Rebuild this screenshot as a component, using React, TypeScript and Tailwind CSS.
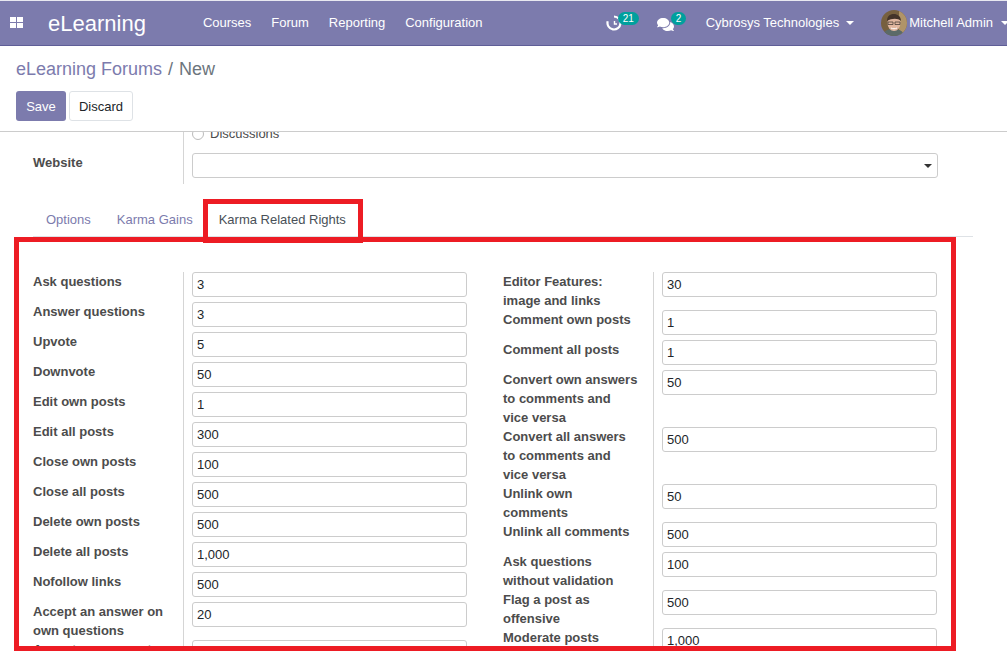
import React from 'react';
import { FaComments } from 'react-icons/fa';

const leftRows: [string, string][] = [
  ['Ask questions', '3'],
  ['Answer questions', '3'],
  ['Upvote', '5'],
  ['Downvote', '50'],
  ['Edit own posts', '1'],
  ['Edit all posts', '300'],
  ['Close own posts', '100'],
  ['Close all posts', '500'],
  ['Delete own posts', '500'],
  ['Delete all posts', '1,000'],
  ['Nofollow links', '500'],
  ['Accept an answer on own questions', '20'],
  ['Accept an answer to all questions', '50'],
];

const rightRows: [string, string][] = [
  ['Editor Features: image and links', '30'],
  ['Comment own posts', '1'],
  ['Comment all posts', '1'],
  ['Convert own answers to comments and vice versa', '50'],
  ['Convert all answers to comments and vice versa', '500'],
  ['Unlink own comments', '50'],
  ['Unlink all comments', '500'],
  ['Ask questions without validation', '100'],
  ['Flag a post as offensive', '500'],
  ['Moderate posts', '1,000'],
];

function Caret() {
  return <span className="inline-block w-0 h-0 border-x-[4px] border-x-transparent border-t-[4px] border-t-current" />;
}

function KarmaRow({ label, value }: { label: string; value: string }) {
  return (
    <div className="flex min-h-[30px]">
      <div className="w-[150px] shrink-0 pr-[14px] font-bold text-[#4c4c4c] leading-[19px]">{label}</div>
      <div className="flex-1 pl-2 border-l border-[#d5d5d5]">
        <div className="h-[25px] border border-[#ccc] rounded-[3px] pl-[4px] leading-[24px] text-[#212529]">{value}</div>
      </div>
    </div>
  );
}

export default function App() {
  return (
    <div className="relative h-[651px] w-[1007px] overflow-hidden bg-white flex flex-col font-['Liberation_Sans',Arial,sans-serif] text-[13px]">
      {/* Top navbar */}
      <div className="h-[46px] shrink-0 bg-[#7c7bad] border-b border-[#5f5e97] border-t border-t-[#e8e8f0] flex items-center text-white">
        <svg width="13" height="12" viewBox="0 0 13 12" className="ml-[10px]" fill="currentColor">
          <rect x="0" y="0" width="6" height="5" />
          <rect x="7" y="0" width="6" height="5" />
          <rect x="0" y="6" width="6" height="5" />
          <rect x="7" y="6" width="6" height="5" />
        </svg>
        <span className="ml-[25px] text-[22px]">eLearning</span>
        <nav className="ml-[57px] flex gap-[20px]">
          <span>Courses</span>
          <span>Forum</span>
          <span>Reporting</span>
          <span>Configuration</span>
        </nav>
        <div className="ml-auto flex items-center mr-[-2px]">
          <div className="relative w-[32px] h-[20px]">
            <svg width="16" height="16" viewBox="0 0 16 16" className="absolute left-0 top-[2px]" fill="none" stroke="currentColor">
              <path d="M8 1.5a6.5 6.5 0 1 1-6.3 4.8" strokeWidth="2.2" />
              <path d="M8.5 6v3H11" strokeWidth="1.4" />
            </svg>
            <span className="absolute left-[12px] top-[-1px] h-[13px] px-[5px] rounded-full bg-[#00a09d] text-[10px] leading-[13px]">21</span>
          </div>
          <div className="relative w-[29px] h-[20px] ml-[19px]">
            <FaComments className="absolute left-0 top-[3px] text-[17px]" />
            <span className="absolute left-[14px] top-[-1px] h-[13px] px-[5px] rounded-full bg-[#00a09d] text-[10px] leading-[13px]">2</span>
          </div>
          <div className="ml-[20px] flex items-center gap-[7px]">
            <span>Cybrosys Technologies</span>
            <Caret />
          </div>
          <div className="ml-[27px] flex items-center gap-[2px]">
            <svg width="26" height="26" viewBox="0 0 26 26">
              <clipPath id="avatar"><circle cx="13" cy="13" r="13" /></clipPath>
              <g clipPath="url(#avatar)">
                <rect width="26" height="26" fill="#77603f" />
                <rect x="18" width="8" height="26" fill="#b09468" />
                <path d="M2 26c1-6 5-7 11-7s9 2 10 7z" fill="#5b6a68" />
                <ellipse cx="13" cy="13" rx="6.5" ry="8" fill="#e0b7a0" />
                <path d="M6 11c0-6 4-7 7-7s7 2 7 7c-3-3-9-3-14 0z" fill="#44342a" />
                <path d="M7 12h5v2.5H7zM14 12h5v2.5h-5z" fill="none" stroke="#4a4038" strokeWidth="0.8" />
                <path d="M10 18c2 1 4 1 6 0" fill="none" stroke="#fff" strokeWidth="1" />
              </g>
            </svg>
            <span className="whitespace-nowrap">Mitchell Admin</span>
            <span className="ml-[6px] flex">
              <Caret />
            </span>
          </div>
        </div>
      </div>

      {/* Control panel */}
      <div className="h-[86px] shrink-0 border-b border-[#ccc] px-4 pt-[12px]">
        <div className="text-[18px] leading-[22px]">
          <span className="text-[#7c7bad]">eLearning Forums</span>
          <span className="text-[#6c757d] ml-[6px]">/</span>
          <span className="text-[#6c757d] ml-[6px]">New</span>
        </div>
        <div className="flex gap-[3px] mt-[11px]">
          <div className="w-[50px] h-[30px] pt-[1px] rounded-[3px] bg-[#7c7bad] text-white flex items-center justify-center">Save</div>
          <div className="w-[64px] h-[30px] pt-[1px] rounded-[3px] bg-white border border-[#dee2e6] text-[#212529] flex items-center justify-center">Discard</div>
        </div>
      </div>

      {/* Form sheet, scrolled part way down */}
      <div className="flex-1 overflow-hidden">
        <div className="-mt-[5px]">
          <div className="flex ml-[33px] w-[905px]">
            <div className="w-[150px] shrink-0 pt-[26px] font-bold text-[#4c4c4c] leading-[19px]">Website</div>
            <div className="flex-1 pl-2 border-l border-[#d5d5d5] h-[57px]">
              <div className="flex items-center gap-[6px] h-[14px] text-[#4c4c4c]">
                <span className="w-[12px] h-[12px] rounded-full border border-[#bbb]" />
                <span>Discussions</span>
              </div>
              <div className="mt-[12px] h-[25px] border border-[#ccc] rounded-[3px] flex items-center justify-end pr-[5px] text-[#333]">
                <Caret />
              </div>
            </div>
          </div>

          {/* Tabs */}
          <div className="ml-[33px] w-[940px] h-[53px] border-b border-[#dee2e6] flex items-end pb-[7px] pl-[13px] gap-[26px] text-[#7c7bad]">
            <span>Options</span>
            <span>Karma Gains</span>
            <span className="text-[#495057]">Karma Related Rights</span>
          </div>

          {/* Karma fields */}
          <div className="flex ml-[33px] mt-[35px] gap-[36px]">
            <div className="w-[434px]">
              {leftRows.map(([label, value]) => (
                <KarmaRow key={label} label={label} value={value} />
              ))}
            </div>
            <div className="w-[434px]">
              {rightRows.map(([label, value]) => (
                <KarmaRow key={label} label={label} value={value} />
              ))}
            </div>
          </div>
        </div>
      </div>

      {/* Red annotation boxes */}
      <div className="absolute left-[14px] top-[237px] w-[942px] h-[414px] border-[5px] border-[#ed1c24]" />
      <div className="absolute left-[203px] top-[199px] w-[160px] h-[44px] border-[5px] border-[#ed1c24]" />
    </div>
  );
}
